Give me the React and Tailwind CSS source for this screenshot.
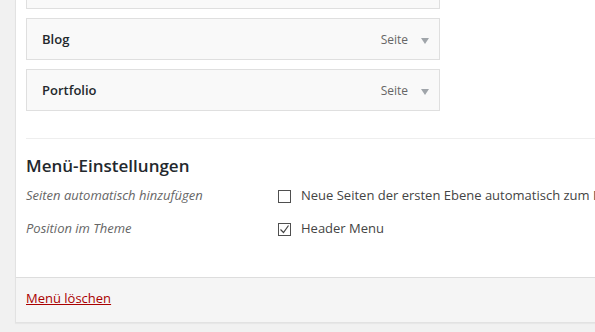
import React from "react";

function Item({ title }) {
  return (
    <div className="flex h-[42px] w-[414px] items-center justify-between border border-[#dfdfdf] bg-[#f9f9f9] pl-[15px] pr-[10px] pt-[2px]">
      <span className="text-[13px] font-semibold text-[#23282d]">{title}</span>
      <span className="flex items-center gap-[13px]">
        <span className="text-[12px] text-[#666]">Seite</span>
        <svg width="8" height="6" viewBox="0 0 8 6" className="mt-[1px]">
          <path d="M0 0 L8 0 L4 6 Z" fill="#a0a5aa" />
        </svg>
      </span>
    </div>
  );
}

function Checkbox({ checked }) {
  return (
    <span className="flex h-[13px] w-[13px] shrink-0 items-center justify-center border border-[#4f4f4f] bg-white">
      {checked && (
        <svg width="11" height="11" viewBox="0 0 11 11">
          <path d="M1.5 5.5 L4.5 8.5 L9.5 1.5" fill="none" stroke="#444" strokeWidth="1.2" />
        </svg>
      )}
    </span>
  );
}

export default function App() {
  return (
    <div
      className="h-[332px] w-[595px] overflow-hidden bg-[#f1f1f1] pl-[15px]"
      style={{ fontFamily: '"Open Sans", "Noto Sans", sans-serif' }}
    >
      <div className="w-[620px] border-b border-l border-[#e2e2e2] bg-white shadow-[0_1px_1px_rgba(0,0,0,0.04)]">
        <div className="pl-[10px]">
          <div className="h-[9px] w-[414px] border-x border-b border-[#dfdfdf] bg-[#f9f9f9]" />
          <div className="mt-[9px]">
            <Item title="Blog" />
          </div>
          <div className="mt-[9px]">
            <Item title="Portfolio" />
          </div>
          <div className="mt-[27px] border-t border-[#eeeeee] pt-[15px]">
            <h3 className="text-[17px] font-semibold leading-[23px] text-[#23282d]">Menü-Einstellungen</h3>
            <div className="mt-[3px] flex h-[32px] items-center">
              <span className="w-[252px] shrink-0 text-[13px] italic text-[#666]">Seiten automatisch hinzufügen</span>
              <Checkbox checked={false} />
              <span className="ml-[10px] whitespace-nowrap text-[13px] text-[#444]">
                Neue Seiten der ersten Ebene automatisch zum Menü hinzufügen
              </span>
            </div>
            <div className="mt-[1px] flex h-[32px] items-center">
              <span className="w-[252px] shrink-0 text-[13px] italic text-[#666]">Position im Theme</span>
              <Checkbox checked={true} />
              <span className="ml-[10px] whitespace-nowrap text-[13px] text-[#444]">Header Menu</span>
            </div>
            <div className="h-[32px]" />
          </div>
        </div>
        <div className="flex h-[45px] items-center border-t border-[#dddddd] bg-[#f5f5f5] pl-[10px] pb-[3px]">
          <a href="#" className="text-[13px] text-[#a00] underline">Menü löschen</a>
        </div>
      </div>
    </div>
  );
}
